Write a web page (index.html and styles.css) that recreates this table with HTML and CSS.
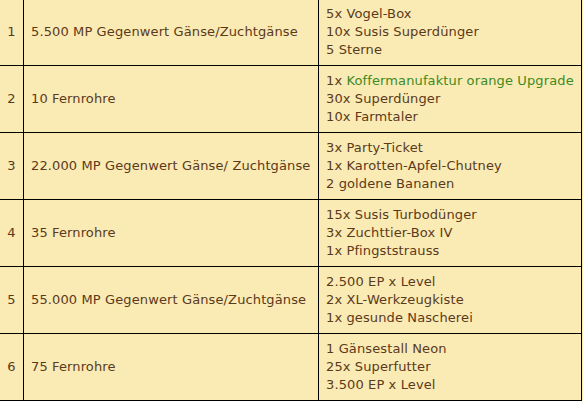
FILE: index.html
```html
<!DOCTYPE html>
<html>
<head>
<meta charset="utf-8">
<link rel="stylesheet" href="styles.css">
</head>
<body>
<table class="rewards">
  <colgroup>
    <col class="c-num">
    <col class="c-goal">
    <col class="c-prize">
  </colgroup>
  <tbody>
    <tr>
      <td class="num">1</td>
      <td>5.500 MP Gegenwert Gänse/Zuchtgänse</td>
      <td>5x Vogel-Box<br>10x Susis Superdünger<br>5 Sterne</td>
    </tr>
    <tr>
      <td class="num">2</td>
      <td>10 Fernrohre</td>
      <td>1x <span class="green">Koffermanufaktur orange Upgrade</span><br>30x Superdünger<br>10x Farmtaler</td>
    </tr>
    <tr>
      <td class="num">3</td>
      <td>22.000 MP Gegenwert Gänse/ Zuchtgänse</td>
      <td>3x Party-Ticket<br>1x Karotten-Apfel-Chutney<br>2 goldene Bananen</td>
    </tr>
    <tr>
      <td class="num">4</td>
      <td>35 Fernrohre</td>
      <td>15x Susis Turbodünger<br>3x Zuchttier-Box IV<br>1x Pfingststrauss</td>
    </tr>
    <tr>
      <td class="num">5</td>
      <td>55.000 MP Gegenwert Gänse/Zuchtgänse</td>
      <td>2.500 EP x Level<br>2x XL-Werkzeugkiste<br>1x gesunde Nascherei</td>
    </tr>
    <tr>
      <td class="num">6</td>
      <td>75 Fernrohre</td>
      <td>1 Gänsestall Neon<br>25x Superfutter<br>3.500 EP x Level</td>
    </tr>
  </tbody>
</table>
</body>
</html>
```
FILE: styles.css
```css
html, body {
  margin: 0;
  padding: 0;
  background: #faeab4;
}
body {
  overflow: hidden;
}
.rewards {
  border-collapse: collapse;
  table-layout: fixed;
  width: 582px;
  margin: -2px 0 0 -1px;
  background: #faeab4;
  font-family: "DejaVu Sans", Verdana, sans-serif;
  font-size: 13px;
  line-height: 18px;
  letter-spacing: 0.12px;
  color: #5a3a1a;
}
.c-num { width: 24px; }
.c-goal { width: 295px; }
.c-prize { width: 263px; }
.rewards td {
  border: 1px solid #000;
  padding: 6px 7px;
  vertical-align: middle;
  white-space: nowrap;
}
.rewards td.num {
  padding: 6px 0;
  text-align: center;
}
.green {
  color: #3d8a1f;
}
```
